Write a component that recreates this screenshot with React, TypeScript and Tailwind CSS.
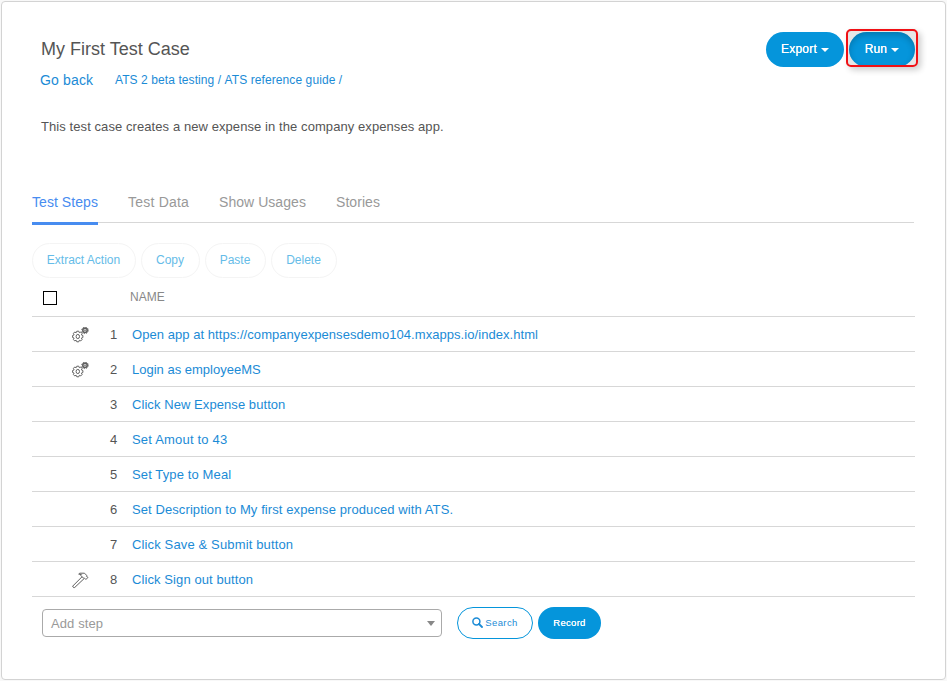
import React from "react";

const GearsIcon = () => (
  <svg width="17" height="17" viewBox="0 0 17 17" fill="none" stroke="#606060" className="block">
    <path
      d="M4.8 4.2h2l.5 1.5 1.5-.7 1.3 1.4-.7 1.5 1.5.6v2l-1.5.6.7 1.5-1.3 1.3-1.5-.6-.5 1.5h-2l-.6-1.5-1.5.6-1.3-1.3.7-1.5-1.5-.6v-2l1.5-.6-.7-1.500L2.700 5l1.500.7z"
      strokeWidth="1"
      strokeLinejoin="round"
    />
    <ellipse cx="5.8" cy="9.500" rx="1.700" ry="2.100" strokeWidth="1" />
    <circle cx="13" cy="3.300" r="2.200" strokeWidth="1.600" />
    <circle cx="13" cy="3.300" r="3.300" strokeWidth="1" strokeDasharray="1.3 1.29" />
    <circle cx="13" cy="3.300" r="0.600" strokeWidth="0.800" />
  </svg>
);

const HammerIcon = () => (
  <svg width="17" height="17" viewBox="0 0 17 17" fill="none" stroke="#606060" strokeWidth="1" strokeLinejoin="round" className="block">
    <path d="M6.7 2.1 7.8 1.2h4.7l2.2 2.2-.3.9 1.6 1.1-2.1 2.1-1.4-1.4h-1.1L8.8 3.5l.8-.8z" />
    <path d="M10 4.8 .8 14l.1 1 .8.6 1-.1L12 6.700" />
  </svg>
);

const Caret = () => (
  <span className="ml-1 mt-0.5 inline-block border-x-4 border-t-4 border-x-transparent border-t-white" />
);

const tabs = [
  { label: "Test Steps", style: "w-[66px] tracking-[0.06px]" },
  { label: "Test Data", style: "w-[61px] tracking-[0.22px]" },
  { label: "Show Usages", style: "w-[87px] tracking-[0.05px]" },
  { label: "Stories", style: "w-[44px] tracking-[0.06px]" },
];

const actions = [
  { label: "Extract Action", width: "w-[104px]" },
  { label: "Copy", width: "w-[59px]" },
  { label: "Paste", width: "w-[61px]" },
  { label: "Delete", width: "w-[66px]" },
];

const steps: { name: string; tracking: string; icon?: React.ReactNode }[] = [
  { name: "Open app at https://companyexpensesdemo104.mxapps.io/index.html", tracking: "tracking-[0.055px]", icon: <GearsIcon /> },
  { name: "Login as employeeMS", tracking: "tracking-[0px]", icon: <GearsIcon /> },
  { name: "Click New Expense button", tracking: "tracking-[0.07px]" },
  { name: "Set Amout to 43", tracking: "tracking-[0.19px]" },
  { name: "Set Type to Meal", tracking: "tracking-[0.12px]" },
  { name: "Set Description to My first expense produced with ATS.", tracking: "tracking-[0.09px]" },
  { name: "Click Save & Submit button", tracking: "tracking-[0.14px]" },
  { name: "Click Sign out button", tracking: "tracking-[0.09px]", icon: <HammerIcon /> },
];

export default function App() {
  return (
    <div className="h-[681px] w-[947px] bg-[#f8f8f8] pl-px pt-px font-['Liberation_Sans',Arial,sans-serif] text-[13px] text-[#555]">
      <main className="h-[679px] w-[945px] rounded border border-[#d3d3d3] bg-white pl-[30px] pr-[27px]">
        <header className="flex h-[180px] justify-between pl-[9px]">
          <div className="pt-[35px]">
            <h1 className="h-6 text-[18px] leading-6 tracking-[0.01px]">My First Test Case</h1>
            <nav className="mt-[9px] flex h-5 items-center text-[#1b8bd6]">
              <a className="-ml-px w-[75px] text-[14px] tracking-[0.15px]">Go back</a>
              <a className="text-[12px] tracking-[0.085px]">ATS 2 beta testing&nbsp;/&nbsp;ATS reference guide&nbsp;/</a>
            </nav>
            <p className="mt-[27px] leading-5 tracking-[0.08px]">This test case creates a new expense in the company expenses app.</p>
          </div>
          <div className="flex gap-[5px] pt-[30px] text-[12px] text-white">
            <button className="flex h-[35px] w-[78px] items-center justify-center rounded-full bg-[#0595db] pb-0.5 tracking-[0.2px] [text-shadow:0_0_0.6px_white]">
              Export<Caret />
            </button>
            <div className="relative -ml-[3px] -mt-[3px] h-[38px] w-[72px] rounded-[5px] bg-[#e6e6e6] pl-[3px] pt-[3px] shadow-[3px_3px_6px_rgba(0,0,0,0.2)]">
              <button className="flex h-[35px] w-[66px] items-center justify-center rounded-full bg-[#0595db] pb-0.5 tracking-[0.1px] shadow-[inset_0_3px_6px_rgba(0,0,0,0.2)] [text-shadow:0_0_0.6px_white]">
                Run<Caret />
              </button>
              <span className="pointer-events-none absolute inset-0 rounded-[5px] border-2 border-[#f01015]" />
            </div>
          </div>
        </header>

        <nav className="flex h-[41px] w-[882px] gap-[30px] border-b border-[#d7d7d7] text-[14px] text-[#999]">
          {tabs.map((tab, i) => (
            <a
              key={tab.label}
              className={`${tab.style} h-[43px] shrink-0 whitespace-nowrap pt-[10px] leading-5 ${
                i === 0 ? "border-b-[3px] border-[#478cf0] text-[#478cf0]" : ""
              }`}
            >
              {tab.label}
            </a>
          ))}
        </nav>

        <div className="mt-5 flex h-[35px] gap-[5px] text-[12px] text-[#65bce8]">
          {actions.map((a) => (
            <button key={a.label} className={`${a.width} h-[35px] shrink-0 whitespace-nowrap rounded-full border border-[#f4f4f4] pb-px pr-px`}>
              {a.label}
            </button>
          ))}
        </div>

        <section className="w-[883px]">
          <div className="flex h-[39px] items-center border-b border-[#d7d7d7]">
            <span className="ml-[11px] mt-[2px] h-[14px] w-[14px] border border-black" />
            <span className="ml-[73px] text-[12px] text-[#888]">NAME</span>
          </div>
          {steps.map((step, i) => (
            <div key={step.name} className="flex h-[35px] items-center border-b border-[#d7d7d7]">
              <span className="ml-10 w-[17px] pt-[3px]">{step.icon}</span>
              <span className="ml-[21px] w-[22px] pt-[2px]">{i + 1}</span>
              <a className={`${step.tracking} pt-[2px] text-[#1b8bd6]`}>{step.name}</a>
            </div>
          ))}
        </section>

        <footer className="flex items-center pl-[10px] pt-[10px]">
          <div className="flex h-7 w-[400px] items-center justify-between rounded-[4px] border border-[#aaa] pl-2 pr-[6px] text-[#999]">
            <span className="pt-px tracking-[0.1px]">Add step</span>
            <span className="border-x-4 border-t-[5px] border-x-transparent border-t-[#888]" />
          </div>
          <button className="ml-[15px] flex h-8 w-[76px] items-center justify-center rounded-full border border-[#0595db] text-[9.5px] tracking-[0.4px] text-[#1b8bd6]">
            <svg width="11" height="11" viewBox="0 0 11 11" fill="none" stroke="currentColor" className="-mt-0.5 mr-[2px]">
              <circle cx="4.4" cy="4.4" r="3.5" strokeWidth="1.5" />
              <path d="m7 7 3 3" strokeWidth="1.8" strokeLinecap="round" />
            </svg>
            <span className="pt-px">Search</span>
          </button>
          <button className="ml-[5px] h-8 w-[63px] rounded-full bg-[#0595db] pt-px text-[9.5px] tracking-[0.3px] text-white [text-shadow:0_0_0.6px_white]">Record</button>
        </footer>
      </main>
    </div>
  );
}
